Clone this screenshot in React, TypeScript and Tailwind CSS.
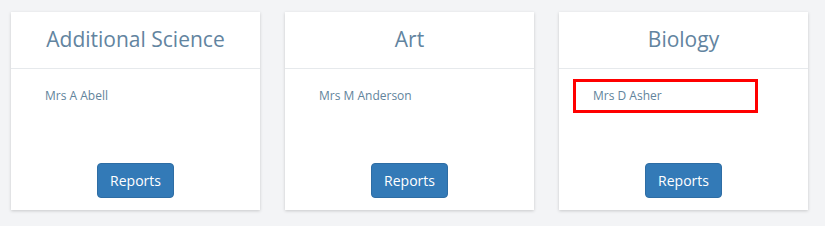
const subjects = [
  { name: "Additional Science", teacher: "Mrs A Abell" },
  { name: "Art", teacher: "Mrs M Anderson" },
  { name: "Biology", teacher: "Mrs D Asher", marked: true },
];

function SubjectCard({ name, teacher, marked }: { name: string; teacher: string; marked?: boolean }) {
  return (
    <div className="flex h-[198px] w-[249px] flex-col bg-white shadow-[0_1px_3px_rgba(0,0,0,0.18)]">
      <div className="flex h-[57px] items-center justify-center border-b border-[#e6e9ec]">
        <h2 className="text-[21px] text-[#6284a0]">{name}</h2>
      </div>
      <div className="flex flex-1 flex-col px-[14px]">
        <div
          className={`mt-[10px] flex h-[34px] w-[185px] items-center text-[12px] text-[#62849c] ${
            marked ? "border-[3px] border-[#ff0000] pl-[17px]" : "pl-[20px]"
          }`}
        >
          {teacher}
        </div>
        <div className="mt-auto mb-[12px] flex justify-center">
          <button className="h-[35px] rounded-[4px] border border-[#2e6da4] bg-[#337ab7] px-[12px] text-[14px] text-white">
            Reports
          </button>
        </div>
      </div>
    </div>
  );
}

export default function App() {
  return (
    <div
      className="flex h-[226px] w-[825px] gap-[25px] bg-[#f3f4f6] pt-[12px] pl-[11px]"
      style={{ fontFamily: '"Open Sans", sans-serif' }}
    >
      {subjects.map((s) => (
        <SubjectCard key={s.name} {...s} />
      ))}
    </div>
  );
}
